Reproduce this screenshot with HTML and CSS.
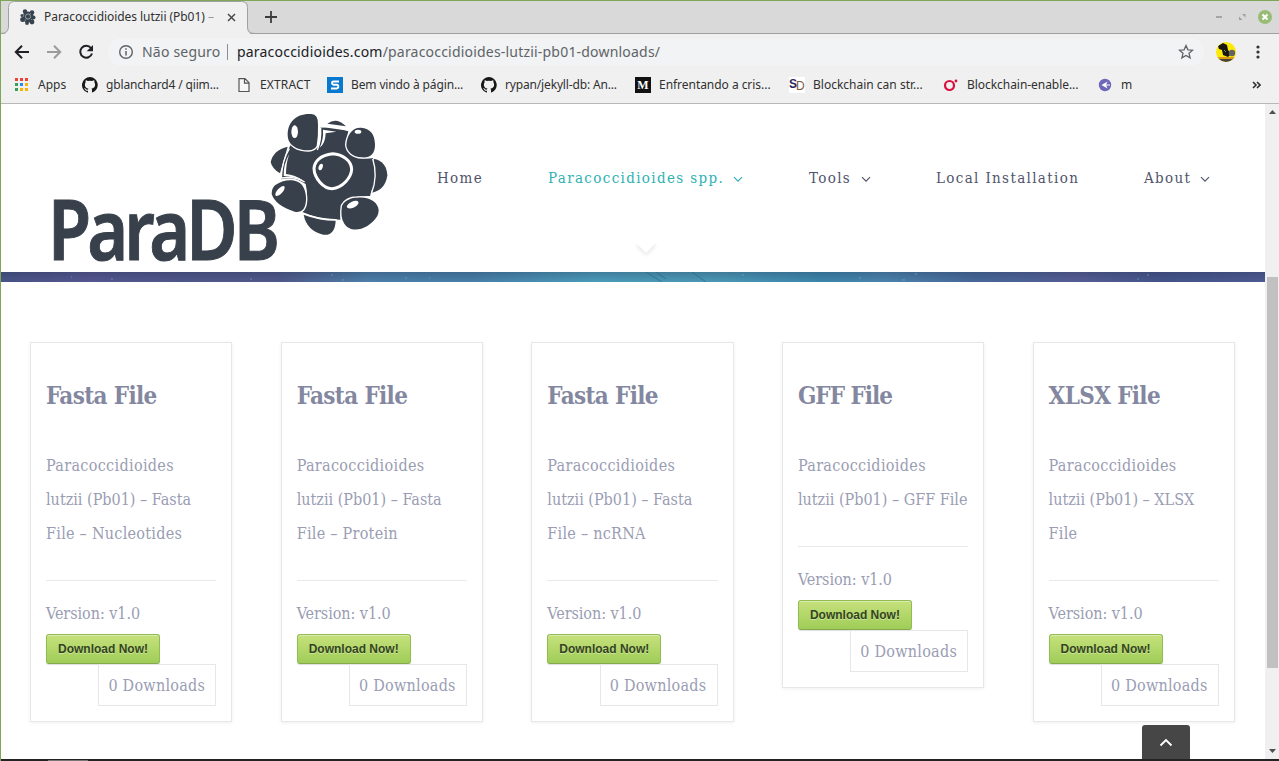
FILE: index.html
```html
<!DOCTYPE html>
<html lang="pt">
<head>
<meta charset="utf-8">
<title>Paracoccidioides lutzii (Pb01)</title>
<link rel="stylesheet" href="styles.css">
</head>
<body>
<svg class="defs" width="0" height="0">
  <symbol id="cat" viewBox="0 0 16 16"><path fill="#191717" d="M8 0a8 8 0 0 0-2.500 15.600c.4.100.5-.2.500-.4v-1.500c-2.200.5-2.700-1-2.700-1-.4-.9-.9-1.200-.9-1.200-.7-.5.1-.5.1-.5.8.1 1.200.8 1.200.8.700 1.200 1.900.9 2.300.7.100-.5.300-.9.500-1.100-1.800-.2-3.600-.9-3.600-4 0-.9.300-1.600.8-2.100-.1-.2-.4-1 .1-2.100 0 0 .7-.2 2.200.8a7.500 7.500 0 0 1 4 0c1.500-1 2.200-.8 2.200-.8.400 1.100.2 1.900.1 2.100.5.600.8 1.300.8 2.100 0 3.100-1.900 3.800-3.700 4 .3.300.6.800.6 1.500v2.200c0 .2.100.5.500.4A8 8 0 0 0 8 0z"/></symbol>
  <symbol id="chev" viewBox="0 0 10 7"><path d="M1 1.200l4 4 4-4" fill="none" stroke="currentColor" stroke-width="1.200"/></symbol>
</svg>
<div class="window">
  <div class="tabstrip">
    <svg class="tabshape" width="260" height="34" viewBox="0 0 260 34"><path d="M0 33h1q6 0 6-6V6q0-6 6-6h227q6 0 6 6v21q0 6 6 6h8v1H0z" fill="#f0f0f0"/><path d="M0 32.500q7 0 7.500-6.500V6.500q0-6 6-6h227q6 0 6 6V26q0 6.500 7 6.500h7" fill="none" stroke="#a0a0a0"/></svg>
    <div class="tab">
      <svg width="16" height="16" viewBox="0 0 16 16"><circle cx="8" cy="8" r="5.600" fill="#38424e"/><g fill="#38424e"><ellipse cx="5" cy="2.500" rx="2.200" ry="2.300"/><circle cx="12" cy="3.500" r="2.300"/><circle cx="13.500" cy="8.500" r="2"/><circle cx="12" cy="13" r="2.400"/><circle cx="7" cy="14" r="1.900"/><circle cx="2.700" cy="10.500" r="2.500"/><circle cx="2" cy="6.500" r="1.500"/></g><circle cx="8" cy="7.500" r="2.600" fill="none" stroke="#aeb4ba" stroke-width=".8"/><path d="M3 8l1-3M10 4l1 1M5 12l1-2M11 11l1-1" stroke="#8b949b" stroke-width=".8"/></svg>
      <span class="tabtitle">Paracoccidioides lutzii (Pb01) <i>–</i></span>
      <svg class="x" width="9" height="9" viewBox="0 0 9 9"><path d="M1 1l7 7M8 1L1 8" stroke="#4a4a4a" stroke-width="1.500"/></svg>
    </div>
    <svg class="plus" width="12" height="12" viewBox="0 0 12 12"><path d="M6 0v12M0 6h12" stroke="#3c3c3c" stroke-width="1.800"/></svg>
    <svg class="winbtns" width="60" height="16" viewBox="0 0 60 16"><path d="M1 8h6" stroke="#8e9499" stroke-width="1.500"/><path d="M27 5h3.500v3.500zM24 7.500v3.500h3.500z" fill="#9aa0a5"/><circle cx="50" cy="8" r="7" fill="#98bc75"/><path d="M47.500 5.500l5 5m0-5l-5 5" stroke="#fff" stroke-width="2"/></svg>
  </div>
  <div class="toolbar">
    <svg width="92" height="20" viewBox="0 0 92 20" fill="none" stroke-width="2"><path d="M15 10H2m6-6.200L1.800 10 8 16.200" stroke="#202124"/><path d="M33 10h13m-6-6.200l6.200 6.200-6.200 6.200" stroke="#9b9b9b"/><path d="M77 6A6 6 0 1 0 78 11.500" stroke="#202124"/><path d="M79 3v6.300h-6.300z" fill="#202124"/></svg>
    <div class="omnibox">
      <svg width="16" height="16" viewBox="0 0 16 16"><circle cx="8" cy="8" r="6.300" fill="none" stroke="#5f6368" stroke-width="1.400"/><path d="M8 7v4.500M8 4.200v1.600" stroke="#5f6368" stroke-width="1.500"/></svg>
      <span class="unsafe">Não seguro</span><span class="bar"></span>
      <span class="url">paracoccidioides.com<em>/paracoccidioides-lutzii-pb01-downloads/</em></span>
      <svg class="star" width="16" height="16" viewBox="0 0 16 16"><path d="M8 1.500l1.900 4.300 4.700.4-3.600 3.100 1.100 4.600L8 11.500l-4.100 2.400L5 9.300 1.400 6.200l4.700-.4z" fill="none" stroke="#5f6368" stroke-width="1.300"/></svg>
    </div>
    <svg class="avatar" width="20" height="20" viewBox="0 0 20 20"><defs><clipPath id="a"><circle cx="10" cy="10" r="10"/></clipPath></defs><g clip-path="url(#a)"><path fill="#fbe908" d="M0 0h20v20H0z"/><path fill="#18160e" d="M2 4l5-3 4 2 1 5 3 4-3 3-5-2-1-5-3-1z"/><circle cx="16" cy="11" r="3.200" fill="#65645c"/><path fill="#dc9b13" d="M0 15h20v2H0z"/><path fill="#4b4536" d="M0 17h20v3H0z"/><path d="M8 8l2 2" stroke="#888"/></g></svg>
    <svg class="dots" width="4" height="14" viewBox="0 0 4 14" fill="#333"><circle cx="2" cy="2" r="1.600"/><circle cx="2" cy="7" r="1.600"/><circle cx="2" cy="12" r="1.600"/></svg>
  </div>
  <div class="bookmarks">
    <span class="bm b1"><svg width="16" height="16" viewBox="0 0 16 16"><path fill="#ea4335" d="M1 1h3v3H1zM6 1h3v3H6zM11 1h3v3h-3z"/><path fill="#34a05a" d="M1 6h3v3H1zM1 11h3v3H1z"/><path fill="#258bf0" d="M6 6h3v3H6z"/><path fill="#fbb306" d="M11 6h3v3h-3zM6 11h3v3H6zM11 11h3v3h-3z"/></svg>Apps</span>
    <span class="bm b2"><svg width="16" height="16"><use href="#cat"/></svg>gblanchard4 / qiim...</span>
    <span class="bm b3"><svg width="16" height="16" viewBox="0 0 16 16"><path d="M3 1.700h6l4 4v8.800H3zM8.500 2v4.200h4" fill="#f7f7f7" stroke="#555" stroke-width="1.200"/></svg>EXTRACT</span>
    <span class="bm b4"><svg width="16" height="16" viewBox="0 0 16 16"><path fill="#0879ce" d="M0 0h16v16H0z"/><path d="M12 4.500H6.500Q5 4.500 5 6t1.500 1.800h3.200q1.600 0 1.600 1.800t-1.600 1.900H4" fill="none" stroke="#fff" stroke-width="1.900"/></svg>Bem vindo à págin...</span>
    <span class="bm b5"><svg width="16" height="16"><use href="#cat"/></svg>rypan/jekyll-db: An...</span>
    <span class="bm b6"><b class="medium">M</b>Enfrentando a cris...</span>
    <span class="bm b7"><b class="sd"><span>S</span><i>D</i></b>Blockchain can str...</span>
    <span class="bm b8"><svg width="16" height="16" viewBox="0 0 16 16"><circle cx="6.500" cy="8.500" r="4.500" fill="none" stroke="#d8103f" stroke-width="2.200"/><circle cx="13" cy="4" r="1.400" fill="#d8103f"/></svg>Blockchain-enable...</span>
    <span class="bm b9"><svg width="16" height="16" viewBox="0 0 16 16"><circle cx="8" cy="8" r="6.200" fill="#6e68b8"/><path d="M10.500 4.500L4.500 8l6 3.500L9 8z" fill="#fff"/><path d="M9 8h4" stroke="#fff"/></svg>m</span>
    <svg class="more" width="9" height="8" viewBox="0 0 9 8"><path d="M1 1l3 3-3 3M5 1l3 3-3 3" fill="none" stroke="#303030" stroke-width="1.600"/></svg>
  </div>
  <div class="viewport">
    <main class="page">
      <header class="site">
        <svg class="logo" width="360" height="168" viewBox="0 0 1080 504">
          <text class="wordmark" x="24" y="469" textLength="684" lengthAdjust="spacingAndGlyphs">ParaDB</text>
          <g fill="#38404b">
            <path d="M743 128Q700 138 692 174Q696 194 720 208z"/>
            <path d="M862 59Q890 38 918 67z"/>
            <path d="M1001 164Q1040 172 1042 214Q1036 258 996 266z"/>
            <path d="M791 332Q835 350 887 350Q885 396 850 392Q800 380 791 332z"/>
            <path d="M752 122Q805 145 836 128Q846 95 842 68L925 80Q912 130 930 151Q965 168 999 162Q1010 220 990 276Q935 274 915 300Q899 320 901 347Q835 347 786 325Q808 280 797 240Q760 218 724 226Q726 170 752 122z"/>
            <g stroke="#fff" stroke-width="8" paint-order="stroke">
              <path d="M814 30C768 27 743 55 743 92C743 126 776 139 806 139Q823 138 830 126Q835 96 834 62Q835 31 814 30z"/>
              <path d="M963 71C936 70 921 94 919 122C920 142 938 159 965 160C990 162 1006 151 1005 120C1004 91 991 73 963 71z"/>
              <path d="M705 244C731 223 772 224 786 243C801 263 802 300 790 316Q782 326 764 323Q706 305 695 270Q695 253 705 244z"/>
              <path d="M906 305C916 286 937 281 951 281C990 277 1014 295 1016 318C1016 335 1006 350 982 366C951 384 925 377 913 359Q900 340 906 305z"/>
            </g>
          </g>
          <g fill="none" stroke="#fff"><path d="M878 149C840 153 823 173 822 194C823 222 850 254 876 254C908 251 934 221 935 195C933 169 908 151 878 149z" stroke-width="9"/><path d="M748 134Q726 170 724 222Q764 216 794 234M786 326Q835 348 890 347M998 164Q1015 215 994 270M842 69Q880 64 926 80M842 72Q844 108 832 138" stroke-width="4"/></g>
          <g fill="#fff"><ellipse cx="764" cy="83" rx="10" ry="19"/><ellipse cx="954" cy="83" rx="10" ry="6"/><ellipse cx="842" cy="189" rx="6" ry="10" transform="rotate(20 842 189)"/><ellipse cx="720" cy="261" rx="8" ry="19" transform="rotate(42 720 261)"/><ellipse cx="938" cy="302" rx="19" ry="9" transform="rotate(-25 938 302)"/><path d="M748 150Q738 177 738 210Q765 212 790 230Q758 217 731 216Q730 180 748 150zM849 77L889 83L857 88Q856 120 839 131Q851 106 849 77z"/></g>
        </svg>
        <nav>
          <a class="n1">Home</a><a class="n2 active">Paracoccidioides spp.</a><svg class="c2 active"><use href="#chev"/></svg><a class="n3">Tools</a><svg class="c3"><use href="#chev"/></svg><a class="n4">Local Installation</a><a class="n5">About</a><svg class="c5"><use href="#chev"/></svg>
        </nav>
        <span class="notch"></span>
      </header>
      <div class="banner"><svg width="1264" height="10" viewBox="0 0 1264 10" fill="none"><path d="M645 0l16 10M655 0l10 7M691 0l14 10" stroke="#2d6689" opacity=".7"/><path d="M330 3h2m9 5h2m85-2h1m-180 1h2m490-4h2m115 3h2m54-4h2m-15 6h3m-500-2h2m740-3h2m-12 4h2M110 7h2m-42-2h1" stroke="#75c8de" opacity=".5"/></svg></div>
      <section class="cards">
        <article><h2>Fasta File</h2><p><span class="l1">Paracoccidioides</span><span class="l2">lutzii (Pb01) – Fasta</span><span class="l3">File – Nucleotides</span></p><hr><div class="version">Version: v1.0</div><button>Download Now!</button><div class="count">0 Downloads</div></article>
        <article><h2>Fasta File</h2><p><span class="l1">Paracoccidioides</span><span class="l2">lutzii (Pb01) – Fasta</span><span class="l3">File – Protein</span></p><hr><div class="version">Version: v1.0</div><button>Download Now!</button><div class="count">0 Downloads</div></article>
        <article><h2>Fasta File</h2><p><span class="l1">Paracoccidioides</span><span class="l2">lutzii (Pb01) – Fasta</span><span class="l3">File – ncRNA</span></p><hr><div class="version">Version: v1.0</div><button>Download Now!</button><div class="count">0 Downloads</div></article>
        <article><h2 class="gff">GFF File</h2><p><span class="l1">Paracoccidioides</span><span class="l2">lutzii (Pb01) – GFF File</span></p><hr><div class="version">Version: v1.0</div><button>Download Now!</button><div class="count">0 Downloads</div></article>
        <article><h2>XLSX File</h2><p><span class="l1">Paracoccidioides</span><span class="l2">lutzii (Pb01) – XLSX</span><span class="l3">File</span></p><hr><div class="version">Version: v1.0</div><button>Download Now!</button><div class="count">0 Downloads</div></article>
      </section>
      <div class="totop"><svg width="14" height="9" viewBox="0 0 14 9"><path d="M1.500 7.500L7 2l5.500 5.500" fill="none" stroke="#fff" stroke-width="1.800"/></svg></div>
    </main>
    <aside class="scroll"><svg width="7" height="4"><path d="M0 4l3.500-4L7 4z" fill="#505050"/></svg><div class="thumb"></div><svg width="7" height="4"><path d="M0 0l3.500 4L7 0z" fill="#505050"/></svg></aside>
  </div>
  <footer><span></span></footer>
</div>
</body>
</html>
```
FILE: styles.css
```css
* { box-sizing: border-box; }
body { margin: 0; overflow: hidden; font-family: "Noto Sans", sans-serif; background: #fff; }
svg { display: block; flex: none; }
.defs { position: absolute; }
.window { width: 1279px; height: 761px; border-left: 1px solid #7fa556; border-top: 1px solid #7fa556; display: flex; flex-direction: column; }
.tabstrip { height: 33px; background: #d9d9d9; display: flex; align-items: center; position: relative; border-bottom: 1px solid #a0a0a0; flex: none; }
.tabshape { position: absolute; left: 0; top: 0; }
.tab { position: relative; width: 247px; display: flex; align-items: center; padding-left: 19px; }
.tabtitle { margin-left: 8px; margin-top: -1px; font-size: 12px; color: #303030; width: 176px; white-space: nowrap; letter-spacing: -.05px; }
.tabtitle i { font-style: normal; color: #999; }
.x { margin-left: 7px; }
.plus { margin-left: 17px; }
.winbtns { margin-left: auto; margin-right: 4px; margin-top: -1px; }
.toolbar { height: 35px; background: #f0f0f0; display: flex; align-items: center; padding-left: 13px; flex: none; }
.omnibox { margin-left: 2px; width: 1096px; height: 28px; border-radius: 14px; background: #f1f3f4; display: flex; align-items: center; padding-left: 10px; font-size: 14px; white-space: nowrap; color: #202124; }
.unsafe { margin-left: 8px; color: #5f6368; width: 85px; letter-spacing: .2px; }
.bar { height: 16px; width: 1px; background: #8b8e91; margin-right: 9px; }
.url { letter-spacing: .2px; }
.url em { font-style: normal; color: #5f6368; }
.star { margin-left: auto; margin-right: 10px; }
.avatar { margin-left: 12px; }
.dots { margin-left: 20px; }
.bookmarks { height: 35px; background: #f0f0f0; border-bottom: 1px solid #b8b8b8; display: flex; align-items: center; padding: 0 0 3px 13px; font-size: 12px; color: #303030; flex: none; }
.bm { display: flex; align-items: center; gap: 8px; white-space: nowrap; }
.b1 { width: 68px; } .b2 { width: 154px; letter-spacing: -.15px; } .b3 { width: 91px; letter-spacing: .15px; } .b4 { width: 154px; letter-spacing: -.13px; } .b5 { width: 154px; letter-spacing: -.16px; } .b6 { width: 154px; letter-spacing: -.04px; } .b7 { width: 154px; } .b8 { width: 154px; letter-spacing: -.05px; }
.more { margin-left: auto; margin-right: 18px; }
.medium, .sd { width: 16px; height: 16px; flex: none; line-height: 16px; text-align: center; letter-spacing: 0; }
.medium { background: #111; color: #fff; font-family: "Liberation Serif", serif; font-size: 12px; }
.sd { background: #fff; font-size: 12px; display: flex; font-family: "Liberation Sans", sans-serif; color: #292660; line-height: 14px; }
.sd i { font-style: normal; font-weight: 400; color: #83553c; line-height: 19px; margin-left: -1px; }
.viewport { display: flex; height: 655px; flex: none; }
.page { width: 1264px; position: relative; background: #fff; }
.site { height: 168px; display: flex; padding-left: 39px; position: relative; }
.logo { width: 360px; overflow: visible; }
.wordmark { font-family: "Noto Sans", sans-serif; font-weight: 600; font-size: 248px; letter-spacing: -14px; fill: #38404b; stroke: #38404b; stroke-width: 3px; }
nav { display: flex; align-items: center; height: 148px; margin-left: 37px; font: 15px "Roboto Slab", "DejaVu Serif Condensed", "DejaVu Serif", serif; font-stretch: condensed; letter-spacing: 1.35px; color: #50546b; white-space: nowrap; }
nav svg { width: 10px; height: 7px; margin-top: 2px; }
.n1 { width: 111px; } .n2 { width: 185px; } .n3 { width: 52px; } .n4 { width: 208px; } .n5 { width: 56px; }
.c2 { margin-right: 66px; } .c3 { margin-right: 65px; }
.active { color: #2fb1b3; }
.notch { position: absolute; left: 638px; top: 132px; width: 14px; height: 14px; transform: rotate(45deg); background: #fff; box-shadow: 2px 2px 4px #e9e9e9; clip-path: polygon(100% 0, 140% 0, 140% 140%, 0 140%, 0 100%); }
.banner { height: 10px; background: linear-gradient(#1c254240, transparent), linear-gradient(90deg, #485486, #555690 7%, #4f578a 14%, #505989 22%, #4d80aa 29%, #477fa9 37%, #4b9cba 47%, #4b98b6 57%, #3d86ad 65%, #4b83ad 70%, #476999 77%, #565d95 85%, #44558a 92%, #4d5b92); }
.cards { display: grid; grid-template-columns: repeat(5, 202.400px); justify-content: space-between; align-items: start; padding: 60px 30px 0 29px; font: 300 16px "Roboto Slab", "DejaVu Serif Condensed", "DejaVu Serif", serif; font-stretch: condensed; color: #9a9db3; line-height: 34px; }
article { border: 1px solid #e7e7e7; padding: 15px; box-shadow: 0 1px 4px #00000010; display: flex; flex-direction: column; white-space: nowrap; }
h2 { font-size: 24px; font-weight: 700; line-height: 34px; margin: 21px 0 36px; color: #83879f; letter-spacing: -.65px; }
.gff { letter-spacing: -1px; }
p { margin: 0 0 29px; display: flex; flex-direction: column; align-items: flex-start; }
.l1 { letter-spacing: .33px; }
.l2 { letter-spacing: 0; }
.l3 { letter-spacing: .27px; }
hr { width: 100%; border: 0; height: 1px; background: #e9e9e9; margin: 0 0 16px; }
.version { letter-spacing: -.05px; }
button { width: 114px; height: 30px; margin-top: 3px; padding: 0; border: 1px solid #92bb51; border-bottom-color: #83a94a; border-radius: 3px; background: linear-gradient(#c6e17c, #9fcd58); box-shadow: inset 0 1px #d7ecae, 0 1px 1px #0002; font: 700 12px "Liberation Sans", sans-serif; color: #354420; text-shadow: 0 1px #c9e59c; }
.count { width: 118px; height: 42px; border: 1px solid #e7e7e7; align-self: flex-end; line-height: 42px; padding-left: 9px; letter-spacing: .25px; }
.totop { position: absolute; left: 1141px; bottom: 0; width: 48px; height: 34px; background: #464646; border-radius: 3px 3px 0 0; display: flex; align-items: center; justify-content: center; }
.scroll { width: 14px; background: #f0f0f0; display: flex; flex-direction: column; align-items: center; padding: 6px 0; }
.thumb { width: 11px; height: 391px; background: #c1c1c1; margin: 163px 0 auto 1px; }
footer { height: 2px; background: #242225; display: flex; align-items: flex-end; padding-left: 47px; flex: none; }
footer span { width: 40px; height: 1px; background: #777; }
```
